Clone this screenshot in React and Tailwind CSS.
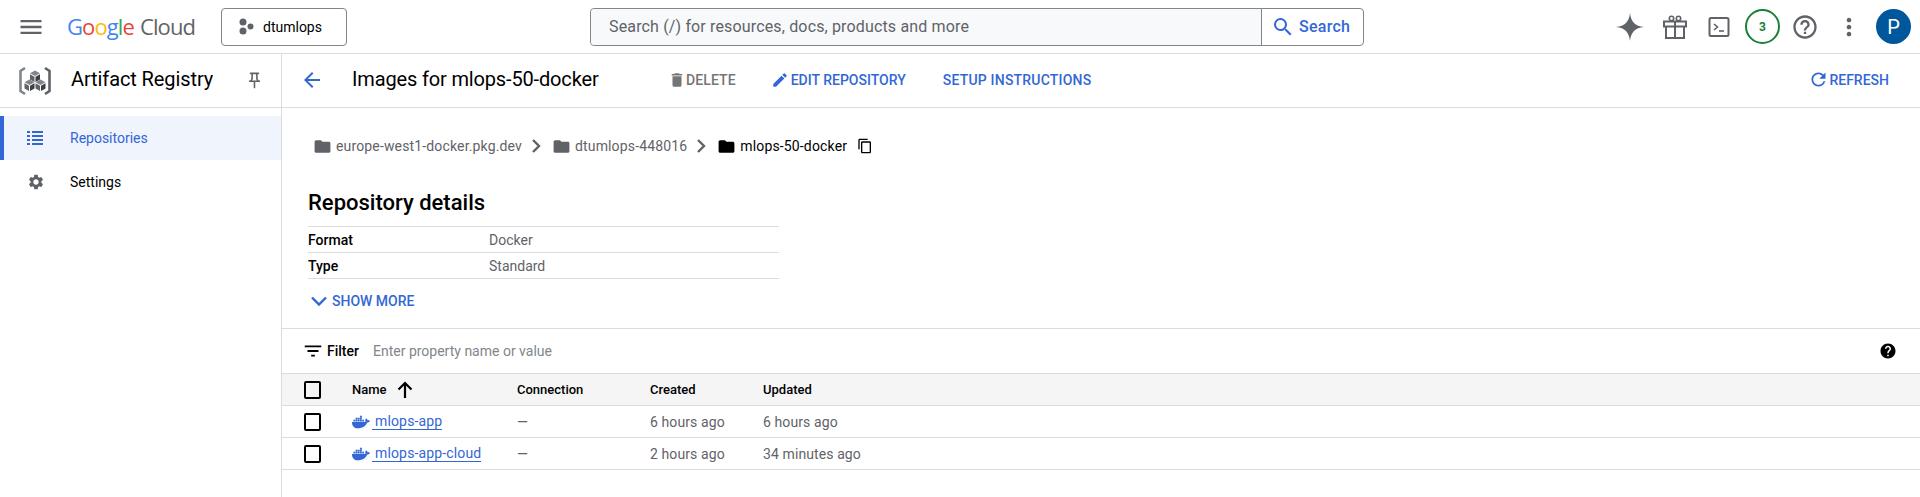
import {
  MdMenu,
  MdHelpOutline,
  MdMoreVert,
  MdOutlinePushPin,
  MdArrowBack,
  MdDelete,
  MdEdit,
  MdRefresh,
  MdFolder,
  MdContentCopy,
  MdFilterList,
  MdHelp,
  MdSettings,
  MdSearch,
} from "react-icons/md";
import { FaDocker } from "react-icons/fa";

function ProjectIcon() {
  return (
    <svg width="16" height="18" viewBox="0 0 16 18" className="fill-[#5f6368]">
      <circle cx="5" cy="4" r="3.5" />
      <circle cx="5" cy="13" r="3.5" />
      <circle cx="12.5" cy="8.5" r="3" />
    </svg>
  );
}

function Cube({ x, y, top, left, right }) {
  return (
    <g transform={`translate(${x} ${y})`}>
      <path d="M0 -5.5 L5 -2.75 L0 0 L-5 -2.75 Z" fill={top} />
      <path d="M-5 -1.75 L-0.500 0.800 V6 L-5 3.400 Z" fill={left} />
      <path d="M5 -1.750 L0.500 0.800 V6 L5 3.400 Z" fill={right} />
    </g>
  );
}

function RegistryLogo() {
  return (
    <svg width="34" height="32" viewBox="0 0 34 32" fill="none">
      <path d="M7 3 L2.500 6 V26 L7 29" stroke="#80868b" strokeWidth="2.600" />
      <path d="M27 3 L31.500 6 V26 L27 29" stroke="#5f6368" strokeWidth="2.600" />
      <Cube x={17} y={11} top="#80868b" left="#5f6368" right="#3c4043" />
      <Cube x={11.500} y={20} top="#80868b" left="#5f6368" right="#3c4043" />
      <Cube x={22.500} y={20} top="#80868b" left="#5f6368" right="#3c4043" />
    </svg>
  );
}

function ListIcon() {
  return (
    <svg width="16" height="14" viewBox="0 0 16 14" className="fill-[#3367d6]">
      <rect x="0" y="0" width="3" height="2" />
      <rect x="5" y="0" width="11" height="2" />
      <rect x="0" y="4" width="3" height="2" />
      <rect x="5" y="4" width="11" height="2" />
      <rect x="0" y="8" width="3" height="2" />
      <rect x="5" y="8" width="11" height="2" />
      <rect x="0" y="12" width="3" height="2" />
      <rect x="5" y="12" width="11" height="2" />
    </svg>
  );
}

function GiftIcon() {
  return (
    <svg width="24" height="24" viewBox="0 0 24 24" fill="none" stroke="#5f6368" strokeWidth="2" className="ml-[18px]">
      <rect x="1" y="6.500" width="22" height="5" />
      <path d="M3 11.500 V23 H21 V11.500" />
      <path d="M12 6.500 V23" />
      <circle cx="8.500" cy="3.500" r="2.200" strokeWidth="1.600" />
      <circle cx="15.500" cy="3.500" r="2.200" strokeWidth="1.600" />
    </svg>
  );
}

function ChevronRight() {
  return (
    <svg width="22" height="22" viewBox="0 0 22 22" fill="none" stroke="#5f6368" strokeWidth="2.400" className="ml-[3px] mr-[5px]">
      <path d="M8 5 L14 11 L8 17" />
    </svg>
  );
}

function Checkbox() {
  return <div className="ml-[22px] h-[18px] w-[17px] shrink-0 rounded-[2px] border-2 border-black" />;
}

function TopBar() {
  return (
    <div className="flex h-[54px] items-center border-b border-[#dadce0] pl-[17px] pr-[9px]">
      <MdMenu className="h-7 w-7 text-[#5f6368]" />
      <div className="ml-[22px] flex w-[131px] items-center font-['Open_Sans',sans-serif] text-[22px] tracking-[-0.9px]">
        <span className="text-[#4285f4]">G</span>
        <span className="text-[#ea4335]">o</span>
        <span className="text-[#fbbc04]">o</span>
        <span className="text-[#4285f4]">g</span>
        <span className="text-[#34a853]">l</span>
        <span className="text-[#ea4335]">e</span>
        <span className="ml-[6px] text-[#5f6368]">Cloud</span>
      </div>
      <div className="ml-[23px] flex h-[38px] w-[126px] items-center rounded border border-[#80868b] pl-4 text-sm text-black">
        <ProjectIcon />
        <span className="ml-[9px]">dtumlops</span>
      </div>
      <div className="ml-[243px] flex h-[38px] w-[774px] items-stretch rounded border border-[#80868b] text-sm">
        <div className="flex flex-1 items-center rounded-l bg-[#f8f9fa] pl-[18px] text-base tracking-[0.15px] text-[#5f6368]">
          Search (/) for resources, docs, products and more
        </div>
        <div className="flex w-[102px] items-center border-l border-[#80868b] pl-[9px] font-medium text-[#3367d6]">
          <MdSearch className="h-6 w-6" />
          <span className="ml-[4px] text-base tracking-[0.25px]">Search</span>
        </div>
      </div>
      <div className="ml-auto flex items-center">
        <svg width="30" height="30" viewBox="0 0 30 30" className="fill-[#5f6368]">
          <path d="M15 1 C16 10 20 14 29 15 C20 16 16 20 15 29 C14 20 10 16 1 15 C10 14 14 10 15 1 Z" />
        </svg>
        <GiftIcon />
        <svg width="22" height="22" viewBox="0 0 22 22" fill="none" className="ml-[21px]">
          <rect x="1.500" y="2" width="19" height="18" rx="1.500" stroke="#5f6368" strokeWidth="2" />
          <path d="M6 8 L9.500 11 L6 14" stroke="#5f6368" strokeWidth="1.600" />
          <path d="M11 15 H16" stroke="#5f6368" strokeWidth="1.600" />
        </svg>
        <div className="ml-[15px] flex h-[35px] w-[35px] items-center justify-center rounded-full border-2 border-[#188038] text-[12px] font-bold text-[#188038]">
          3
        </div>
        <MdHelpOutline className="ml-[11px] h-7 w-7 text-[#5f6368]" />
        <MdMoreVert className="ml-[16px] h-7 w-7 text-[#5f6368]" />
        <div className="ml-[13px] flex h-[35px] w-[35px] items-center justify-center rounded-full bg-[#01579b] text-[20px] text-white">
          P
        </div>
      </div>
    </div>
  );
}

function Sidebar() {
  return (
    <div className="w-[282px] shrink-0 border-r border-[#dadce0]">
      <div className="flex h-[54px] items-center border-b border-[#dadce0] pl-[18px]">
        <RegistryLogo />
        <span className="mb-[3px] ml-[19px] text-[20px] tracking-[-0.1px] text-black">Artifact Registry</span>
        <MdOutlinePushPin className="ml-[32px] h-[19px] w-[19px] text-[#5f6368]" />
      </div>
      <div className="mt-2 flex h-[44px] items-center border-l-4 border-[#3367d6] bg-[#f0f4fd] pl-[23px] text-sm text-[#3367d6]">
        <ListIcon />
        <span className="ml-[27px]">Repositories</span>
      </div>
      <div className="flex h-[44px] items-center pl-[27px] text-sm text-black">
        <MdSettings className="h-[18px] w-[18px] text-[#5f6368]" />
        <span className="ml-[25px]">Settings</span>
      </div>
    </div>
  );
}

function ActionBar() {
  return (
    <div className="flex h-[54px] items-center border-b border-[#dadce0] pb-[2px] pl-[18px] pr-[31px] text-sm font-medium text-[#3367d6]">
      <MdArrowBack className="h-6 w-6" />
      <span className="ml-[28px] w-[316px] text-[20px] font-normal tracking-[-0.15px] text-black">Images for mlops-50-docker</span>
      <div className="flex items-center text-[#757575]">
        <MdDelete className="h-[18px] w-[18px]" />
        <span className="tracking-[0.1px]">DELETE</span>
      </div>
      <div className="ml-[35px] flex items-center">
        <MdEdit className="h-[18px] w-[18px]" />
        <span className="ml-[2px]">EDIT REPOSITORY</span>
      </div>
      <span className="ml-[37px] tracking-[0.2px]">SETUP INSTRUCTIONS</span>
      <div className="ml-auto flex items-center">
        <MdRefresh className="h-[21px] w-[21px]" />
        <span>REFRESH</span>
      </div>
    </div>
  );
}

function Crumb({ label, dark }) {
  return (
    <div className={`flex items-center ${dark ? "text-[#000000]" : "text-[#5f6368]"}`}>
      <MdFolder className="h-[19px] w-[19px]" />
      <span className="ml-[4px] tracking-[0.15px]">{label}</span>
    </div>
  );
}

function DetailRow({ name, value }) {
  return (
    <div className="flex h-[26px] items-center border-b border-[#dadce0] text-sm">
      <span className="w-[181px] font-medium text-black">{name}</span>
      <span className="text-[#5f6368]">{value}</span>
    </div>
  );
}

function ImageRow({ name, created, updated }) {
  return (
    <div className="flex h-[32px] items-center border-b border-[#dadce0] text-sm text-[#5f6368]">
      <Checkbox />
      <div className="ml-[31px] flex w-[165px] items-center">
        <FaDocker className="h-[18px] w-[18px] text-[#3367d6]" />
        <a className="ml-[2px] border-b border-[#3367d6] pl-[3px] leading-[16px] tracking-[0.15px] text-[#3367d6]">{name}</a>
      </div>
      <span className="w-[133px]">—</span>
      <span className="w-[113px] tracking-[0.1px]">{created}</span>
      <span className="tracking-[0.1px]">{updated}</span>
    </div>
  );
}

function Content() {
  return (
    <div className="flex-1">
      <ActionBar />
      <div className="h-[220px] pl-[26px]">
        <div className="flex items-center pl-[5px] pt-[27px] text-sm">
          <Crumb label="europe-west1-docker.pkg.dev" />
          <ChevronRight />
          <Crumb label="dtumlops-448016" />
          <ChevronRight />
          <Crumb label="mlops-50-docker" dark />
          <MdContentCopy className="ml-[10px] h-[16px] w-[16px] text-black" />
        </div>
        <h2 className="mt-[32px] text-[22px] font-medium leading-[28px] text-black">Repository details</h2>
        <div className="mt-[9px] w-[471px] border-t border-[#dadce0]">
          <DetailRow name="Format" value="Docker" />
          <DetailRow name="Type" value="Standard" />
        </div>
        <div className="mt-[10px] flex items-center text-sm font-medium text-[#3367d6]">
          <svg width="24" height="24" viewBox="0 0 24 24" fill="none" stroke="#3367d6" strokeWidth="2.400" className="-ml-[1px]">
            <path d="M5 8.500 L12 15.500 L19 8.500" />
          </svg>
          <span className="ml-[1px]">SHOW MORE</span>
        </div>
      </div>
      <div className="flex h-[46px] items-center border-y border-[#dadce0] pl-[20px] pr-[23px] text-sm">
        <MdFilterList className="h-[22px] w-[22px] text-black" />
        <span className="ml-[3px] font-medium text-black">Filter</span>
        <span className="ml-[14px] text-[#80868b]">Enter property name or value</span>
        <MdHelp className="ml-auto h-[18px] w-[18px] text-black" />
      </div>
      <div className="flex h-[32px] items-center border-b border-[#dadce0] bg-[#f5f5f5] text-[13px] font-medium text-black">
        <Checkbox />
        <div className="ml-[31px] flex w-[165px] items-center">
          <span>Name</span>
          <svg width="22" height="22" viewBox="0 0 22 22" fill="none" stroke="#000000" strokeWidth="2.200" className="ml-[7px]">
            <path d="M11 19 V4 M4.500 10.500 L11 4 L17.500 10.500" />
          </svg>
        </div>
        <span className="w-[133px]">Connection</span>
        <span className="w-[113px]">Created</span>
        <span>Updated</span>
      </div>
      <ImageRow name="mlops-app" created="6 hours ago" updated="6 hours ago" />
      <ImageRow name="mlops-app-cloud" created="2 hours ago" updated="34 minutes ago" />
    </div>
  );
}

export default function App() {
  return (
    <div className="h-[497px] overflow-hidden bg-white font-['Roboto',sans-serif]">
      <TopBar />
      <div className="flex h-[443px]">
        <Sidebar />
        <Content />
      </div>
    </div>
  );
}
